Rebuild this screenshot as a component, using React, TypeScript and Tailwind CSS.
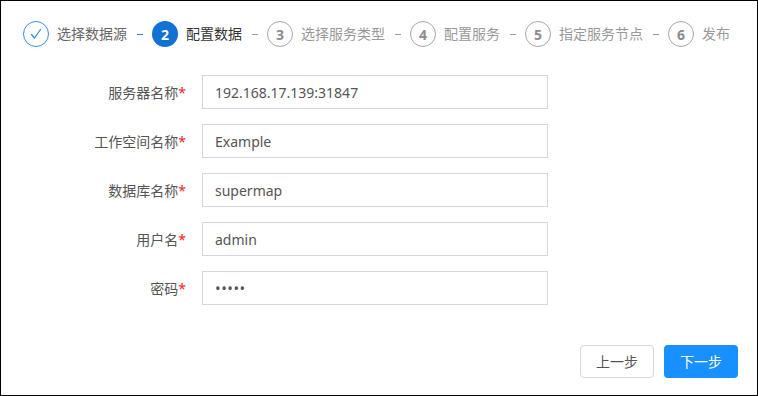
const font = { fontFamily: '"Noto Sans", "Noto Sans CJK SC", sans-serif' };

type Step = { label: string; state: "done" | "active" | "todo" };

const steps: Step[] = [
  { label: "选择数据源", state: "done" },
  { label: "配置数据", state: "active" },
  { label: "选择服务类型", state: "todo" },
  { label: "配置服务", state: "todo" },
  { label: "指定服务节点", state: "todo" },
  { label: "发布", state: "todo" },
];

const fields = [
  { label: "服务器名称", value: "192.168.17.139:31847" },
  { label: "工作空间名称", value: "Example" },
  { label: "数据库名称", value: "supermap" },
  { label: "用户名", value: "admin" },
  { label: "密码", value: "•••••", secret: true },
];

function StepCircle({ step, index }: { step: Step; index: number }) {
  if (step.state === "done") {
    return (
      <div className="w-[26px] h-[26px] rounded-full border border-[#3a8ee6] flex items-center justify-center">
        <svg width="14" height="14" viewBox="0 0 14 14" fill="none">
          <path d="M2.5 7.5 L5.5 11 L11.5 2.5" stroke="#2f86e0" strokeWidth="1.2" strokeLinecap="round" strokeLinejoin="round" />
        </svg>
      </div>
    );
  }
  if (step.state === "active") {
    return (
      <div className="w-[26px] h-[26px] rounded-full bg-[#1272d3] text-white text-[14px] font-bold flex items-center justify-center">
        {index + 1}
      </div>
    );
  }
  return (
    <div className="w-[26px] h-[26px] rounded-full border border-[#a8a8a8] text-[#8c8c8c] text-[14px] font-bold flex items-center justify-center">
      {index + 1}
    </div>
  );
}

export default function App() {
  return (
    <div className="w-[758px] h-[396px] border border-black bg-white flex flex-col" style={font}>
      {/* 步骤条 */}
      <div className="flex items-center pt-[20px] pl-[22px]">
        {steps.map((step, i) => (
          <div key={step.label} className="flex items-center">
            {i > 0 && (
              <span
                className={`block w-[6px] h-px ml-[10px] mr-[9px] ${
                  steps[i - 1].state === "done" ? "bg-[#2f86e0]" : "bg-[#999]"
                }`}
              />
            )}
            <StepCircle step={step} index={i} />
            <span
              className={`ml-[8px] text-[14px] leading-[26px] whitespace-nowrap ${
                step.state === "active"
                  ? "text-[#333]"
                  : step.state === "done"
                  ? "text-[#666]"
                  : "text-[#999]"
              }`}
            >
              {step.label}
            </span>
          </div>
        ))}
      </div>

      {/* 表单 */}
      <div className="flex flex-col gap-[15px] mt-[28px]">
        {fields.map((f) => (
          <div key={f.label} className="flex items-center">
            <div className="w-[185px] text-right text-[14px] text-[#555]">
              {f.label}
              <span className="text-[#f5222d]">*</span>
            </div>
            <div
              className={`ml-[16px] w-[346px] h-[34px] border border-[#d3d7de] px-[12px] flex items-center text-[#555] ${
                f.secret ? "text-[15px] tracking-[0.5px]" : "text-[14px]"
              }`}
            >
              {f.value}
            </div>
          </div>
        ))}
      </div>

      {/* 按钮 */}
      <div className="mt-auto flex justify-end gap-[10px] pr-[19px] pb-[17px]">
        <button className="w-[74px] h-[33px] rounded-[4px] border border-[#d9d9d9] bg-white text-[14px] text-[#555]">
          上一步
        </button>
        <button className="w-[74px] h-[33px] rounded-[4px] bg-[#1890ff] text-[14px] text-white">
          下一步
        </button>
      </div>
    </div>
  );
}
